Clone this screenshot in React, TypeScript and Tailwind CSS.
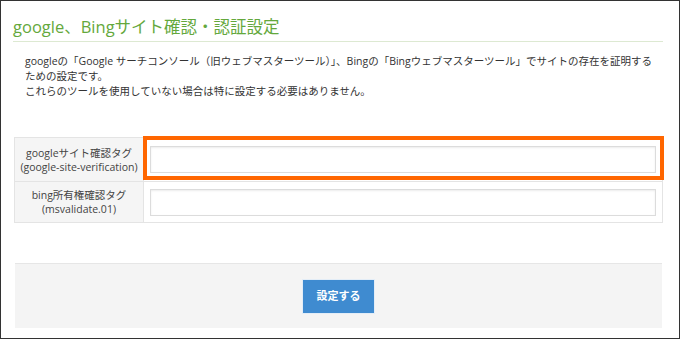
import React from 'react';

const font = { fontFamily: '"Open Sans", "Noto Sans CJK JP", sans-serif' };

const rows = [
  { ja: 'googleサイト確認タグ', en: '(google-site-verification)' },
  { ja: 'bing所有権確認タグ', en: '(msvalidate.01)' },
];

export default function App() {
  return (
    <div className="relative w-[680px] h-[339px] border border-[#333] bg-white text-[#333]" style={font}>
      <div className="pl-[12px] pr-[16px]">
        {/* Title */}
        <h2 className="pt-[15px] pb-[3px] text-[16.5px] leading-[22px] text-[#64a83c] border-b border-[#dde9d2]">
          google、Bingサイト確認・認証設定
        </h2>

        <p className="mt-[12px] pl-[12px] text-[10.5px] leading-[15px] text-[#333]">
          googleの「Google サーチコンソール（旧ウェブマスターツール）」、Bingの「Bingウェブマスターツール」でサイトの存在を証明する
          <br />
          ための設定です。
          <br />
          これらのツールを使用していない場合は特に設定する必要はありません。
        </p>

        {/* Form table */}
        <div className="mt-[38px] ml-[1px] grid grid-cols-[129px_1fr] border-l border-t border-[#e4e4e4]">
          {rows.map((r, i) => (
            <React.Fragment key={r.en}>
              <div className={`${i === 0 ? 'h-[44px]' : 'h-[41px]'} flex flex-col items-center justify-center bg-[#f5f5f5] border-r border-b border-[#e4e4e4] text-[10.5px] leading-[14px] text-[#444]`}>
                <span>{r.ja}</span>
                <span>{r.en}</span>
              </div>
              <div className="flex items-center px-[6px] border-r border-b border-[#e4e4e4]">
                <input
                  type="text"
                  className="w-full h-[27px] border border-[#dcdcdc] bg-white shadow-[inset_0_1px_2px_rgba(0,0,0,0.08)] outline-none"
                />
              </div>
            </React.Fragment>
          ))}
        </div>

        {/* Footer */}
        <div className="mt-[40px] ml-[2px] mr-[1px] h-[65px] flex items-center justify-center bg-[#f4f4f4] border-t border-[#e6e6e6]">
          <button className="w-[73px] h-[35px] bg-[#3f8bd0] border border-[#e3edf7] text-white text-[11px] font-bold">
            設定する
          </button>
        </div>
      </div>

      {/* highlight annotation */}
      <div className="absolute left-[142px] top-[135px] w-[521px] h-[44px] border-[4px] border-[#ff6600]" />
    </div>
  );
}
